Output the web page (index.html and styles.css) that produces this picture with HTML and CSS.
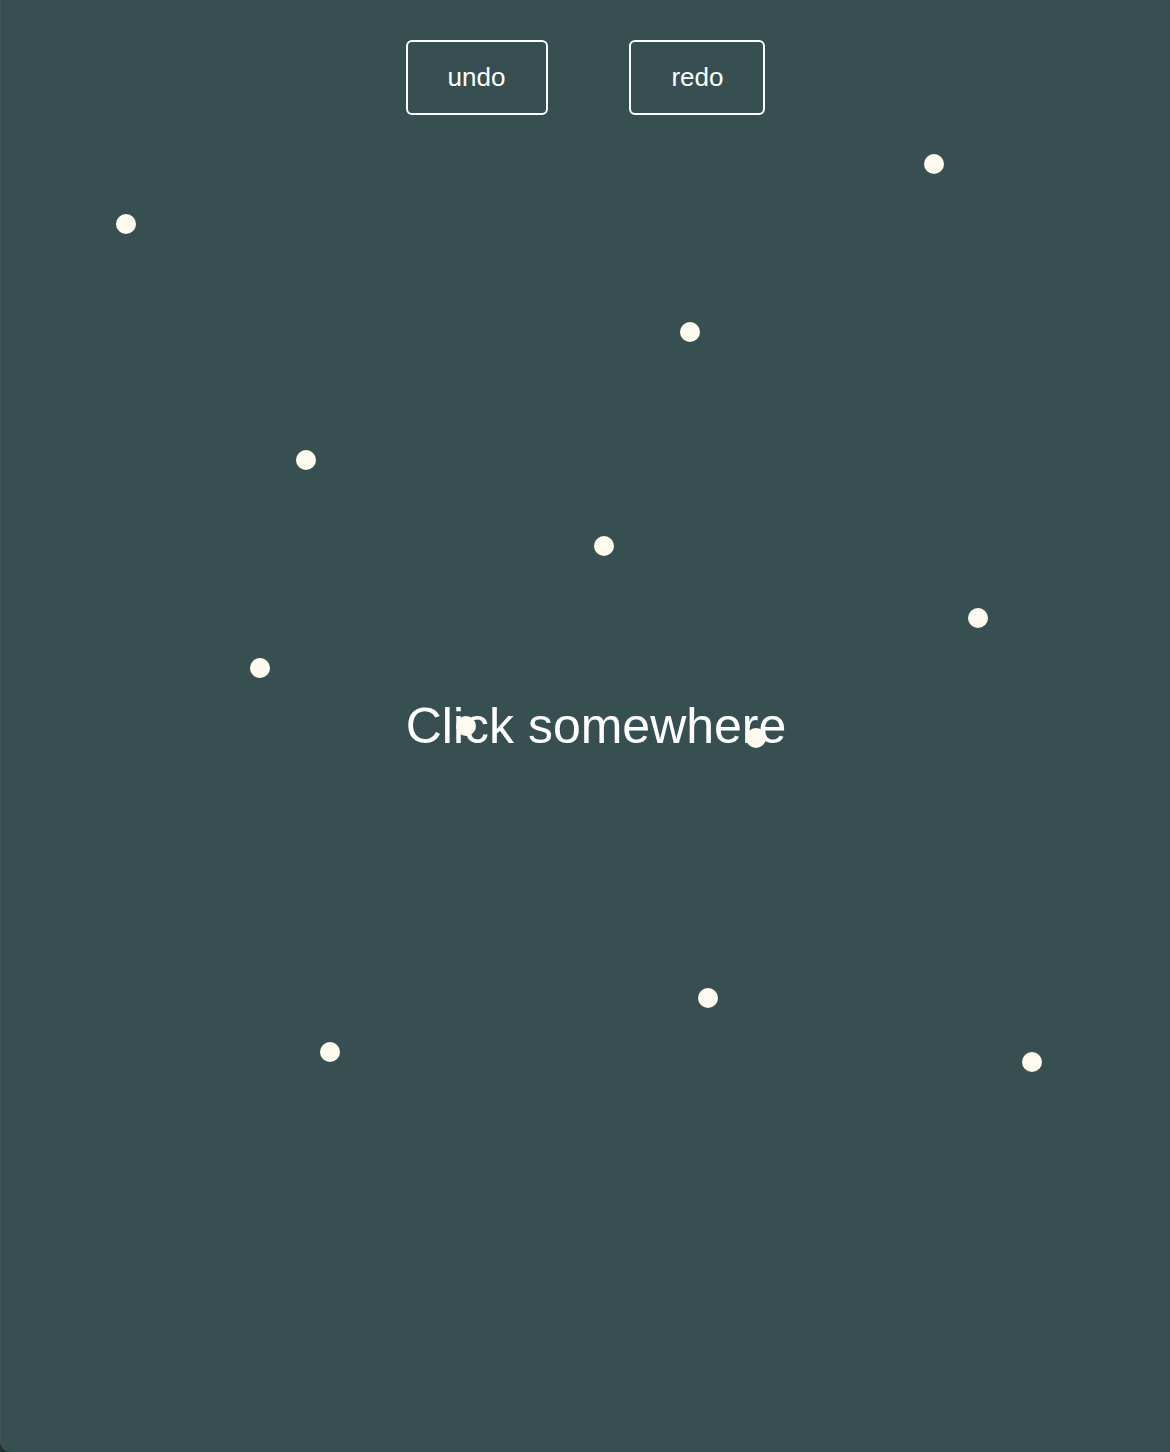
FILE: index.html
```html
<!DOCTYPE html>
<html>
<head>
<meta charset="utf-8">
<link rel="stylesheet" href="styles.css">
</head>
<body>
<div class="app">
  <div class="toolbar">
    <button class="btn btn-undo">undo</button>
    <button class="btn">redo</button>
  </div>
  <div class="hint">Click somewhere</div>
  <span class="dot" style="left:126px;top:224px"></span>
  <span class="dot" style="left:934px;top:164px"></span>
  <span class="dot" style="left:690px;top:332px"></span>
  <span class="dot" style="left:306px;top:460px"></span>
  <span class="dot" style="left:604px;top:546px"></span>
  <span class="dot" style="left:978px;top:618px"></span>
  <span class="dot" style="left:260px;top:668px"></span>
  <span class="dot" style="left:466px;top:726px"></span>
  <span class="dot" style="left:756px;top:738px"></span>
  <span class="dot" style="left:708px;top:998px"></span>
  <span class="dot" style="left:330px;top:1052px"></span>
  <span class="dot" style="left:1032px;top:1062px"></span>
</div>
</body>
</html>
```

FILE: styles.css
```css
html, body {
  margin: 0;
  padding: 0;
  background: #22302f;
}
body {
  width: 1170px;
  height: 1452px;
  overflow: hidden;
  font-family: "Liberation Sans", Arial, sans-serif;
}
.app {
  position: relative;
  width: 1170px;
  height: 1452px;
  background: #374f51;
  box-shadow: inset 1px 0 0 #3d5557;
  border-radius: 0 0 0 11px;
  overflow: hidden;
}
.toolbar {
  display: flex;
  justify-content: center;
  gap: 81px;
  padding: 40px 0 0 1px;
}
.btn {
  font-family: "Liberation Sans", Arial, sans-serif;
  font-size: 26px;
  line-height: 30px;
  color: #ffffff;
  background: transparent;
  border: 2px solid #ffffff;
  border-radius: 6px;
  padding: 20px 40px 21px;
}
.btn-undo {
  padding-right: 41px;
}
.hint {
  position: absolute;
  left: 596px;
  top: 726px;
  transform: translate(-50%, -50%);
  font-size: 50px;
  line-height: 60px;
  color: #ffffff;
  white-space: nowrap;
}
.dot {
  position: absolute;
  width: 20px;
  height: 20px;
  margin: -10px 0 0 -10px;
  border-radius: 50%;
  background: #fffaf0;
}
```
